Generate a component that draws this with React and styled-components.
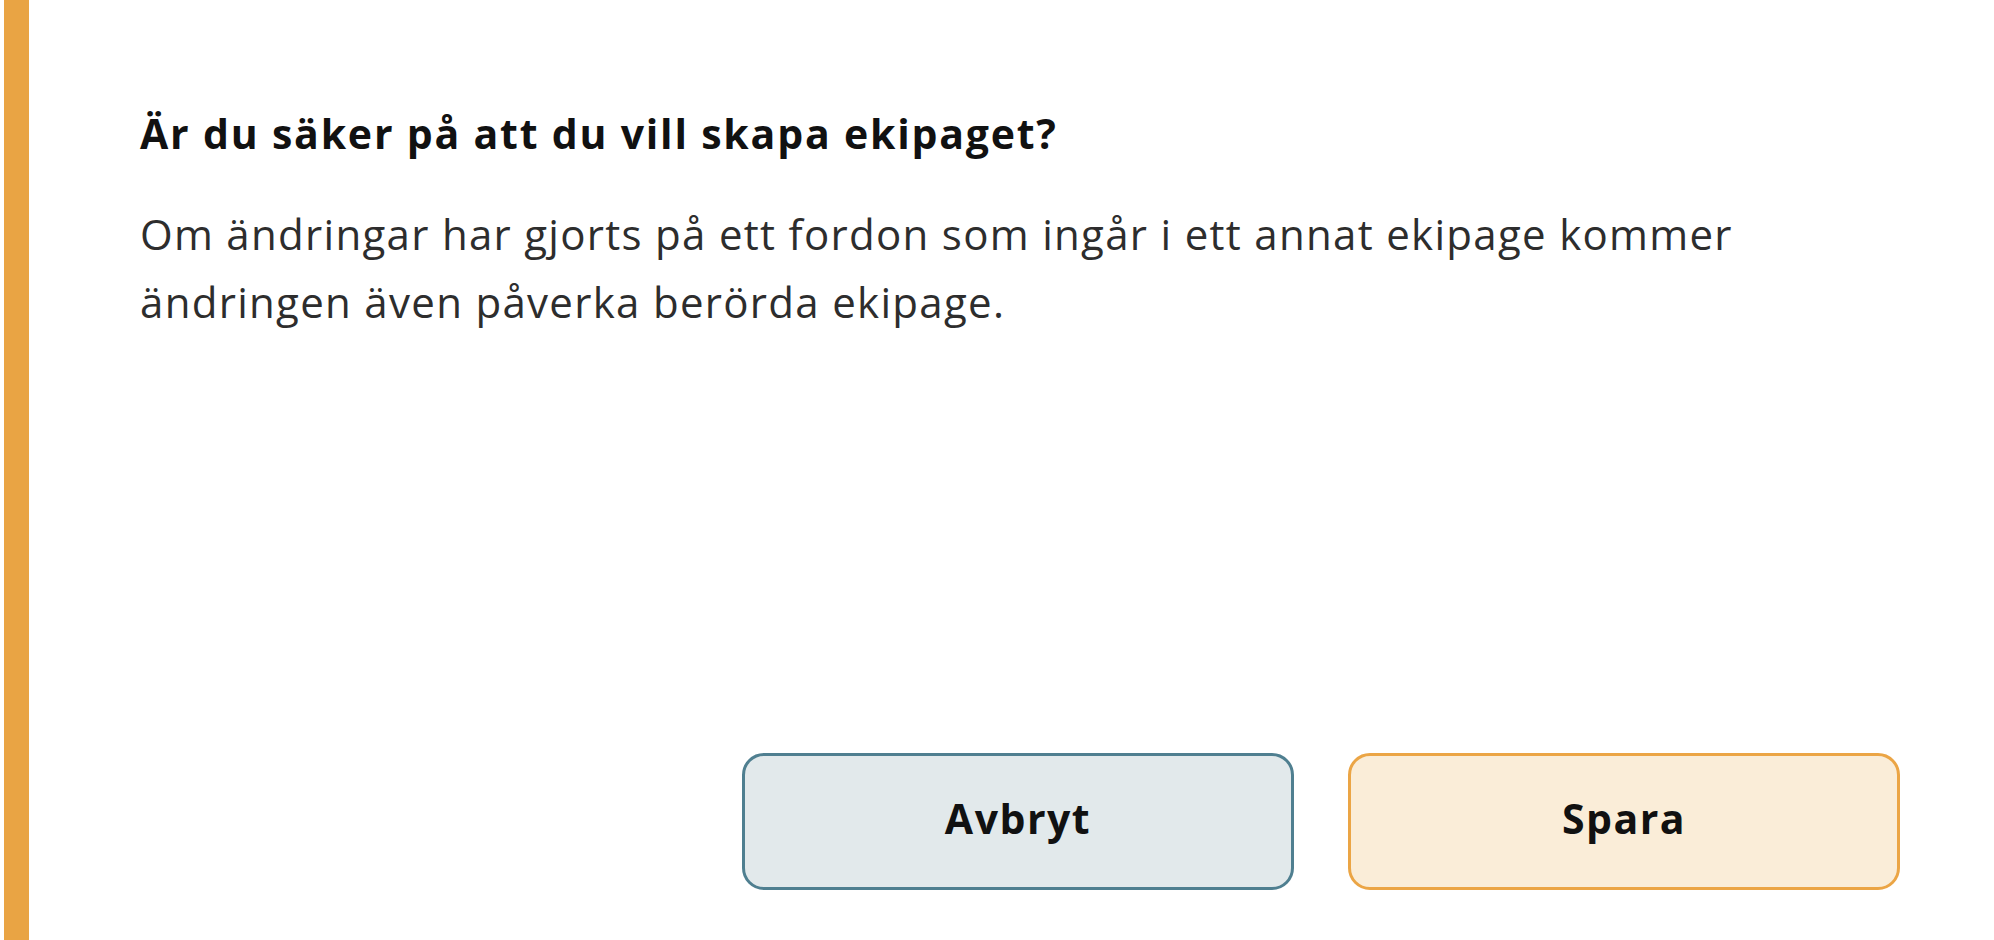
import React from "react";
import styled, { createGlobalStyle } from "styled-components";

const GlobalStyle = createGlobalStyle`
    html, body {
        margin: 0;
        padding: 0;
        background: #fff;
    }
    body {
        font-family: "Open Sans", "Noto Sans", sans-serif;
    }
`;

const Dialog = styled.div`
    display: flex;
    flex-direction: column;
    box-sizing: border-box;
    height: 940px;
    margin-left: 4px;
    padding: 107px 94px 50px 111px;
    border-left: 25px solid #e9a444;
    background: #fff;
`;

const Title = styled.h2`
    margin: 0;
    font-size: 41px;
    line-height: 52px;
    letter-spacing: 1.8px;
    font-weight: 700;
    color: #111;
`;

const Message = styled.p`
    margin: 41px 0 0;
    max-width: 1680px;
    font-size: 42px;
    line-height: 68px;
    letter-spacing: 1.3px;
    font-weight: 400;
    color: #2d2d2d;
`;

const Footer = styled.div`
    display: flex;
    justify-content: flex-end;
    gap: 54px;
    margin-top: auto;
`;

const Button = styled.button`
    box-sizing: border-box;
    width: 552px;
    height: 137px;
    padding: 0 0 8px;
    border-radius: 22px;
    border: 3px solid ${(p) => (p.$primary ? "#eba545" : "#4f7f90")};
    background: ${(p) => (p.$primary ? "#faedd8" : "#e2e9eb")};
    color: #111;
    font-family: "Open Sans", "Noto Sans", sans-serif;
    font-size: 41px;
    letter-spacing: 1.5px;
    font-weight: 700;
    cursor: pointer;
`;

const App = () => {
    return (
        <>
            <GlobalStyle />
            <Dialog>
                <Title>Är du säker på att du vill skapa ekipaget?</Title>
                <Message>
                    Om ändringar har gjorts på ett fordon som ingår i ett annat ekipage kommer
                    ändringen även påverka berörda ekipage.
                </Message>
                <Footer>
                    <Button type="button">Avbryt</Button>
                    <Button type="button" $primary>Spara</Button>
                </Footer>
            </Dialog>
        </>
    );
};

export default App;
